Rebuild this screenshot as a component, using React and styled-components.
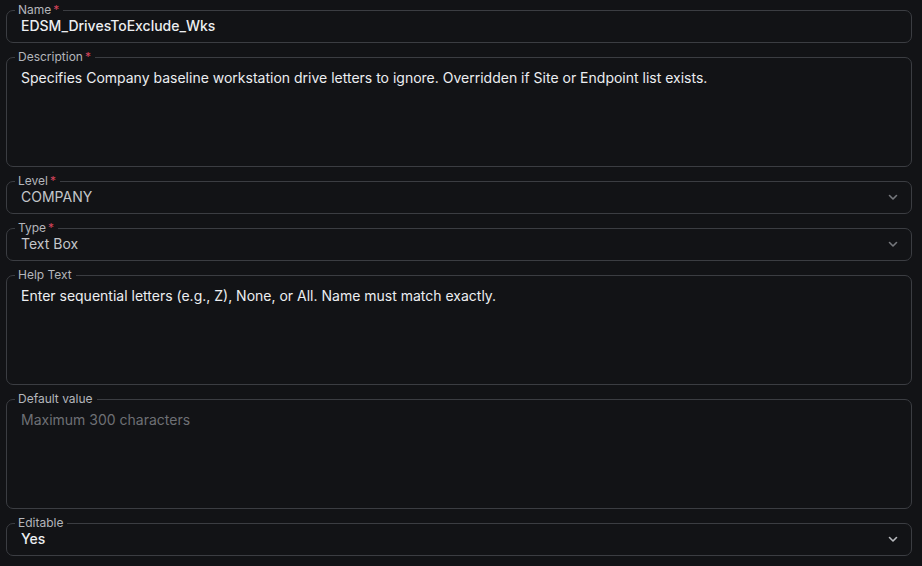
import React from 'react';
import styled, { createGlobalStyle } from 'styled-components';

const GlobalStyle = createGlobalStyle`
  html, body {
    margin: 0;
    background: #121316;
  }
  body {
    font-family: Inter, "Noto Sans", sans-serif;
  }
`;

const Form = styled.form`
  display: flex;
  flex-direction: column;
  gap: 7px;
  padding: 3px 10px 0 6px;
`;

const Field = styled.fieldset`
  margin: 0;
  padding: 0 14px;
  border: 1px solid #3b3d42;
  border-radius: 7px;
  min-width: 0;
`;

const Legend = styled.legend`
  margin-left: -6px;
  padding: 0 4px 0 3px;
  font-size: 12px;
  line-height: 14px;
  color: #b4b6bb;
`;

const Required = styled.span`
  color: #d2435a;
  margin-left: 2px;
`;

const Value = styled.div`
  display: flex;
  align-items: ${(p) => (p.$tall ? 'flex-start' : 'center')};
  justify-content: space-between;
  font-size: 14px;
  line-height: 20px;
  padding: ${(p) => (p.$tall ? '4px 0 0' : '0 0 6px')};
  margin-top: ${(p) => (p.$tall ? '0' : '-1px')};
  min-height: ${(p) => (p.$tall ? '98px' : '0')};
  color: ${(p) => (p.$muted ? '#c4c6ca' : p.$placeholder ? '#6e7075' : '#eceef1')};
  font-weight: ${(p) => (p.$strong ? 500 : 400)};
`;

const Chevron = styled.svg`
  flex: none;
  width: 12px;
  height: 12px;
  margin-right: -2px;
  color: ${(p) => (p.$light ? '#b8babe' : '#75777c')};
`;

const ChevronIcon = ({ light }) => (
  <Chevron $light={light} viewBox="0 0 12 12" fill="none">
    <path d="M2.5 4.5 6 8l3.5-3.5" stroke="currentColor" strokeWidth="1.6" strokeLinecap="round" strokeLinejoin="round" />
  </Chevron>
);

const fields = [
  { label: 'Name', required: true, value: 'EDSM_DrivesToExclude_Wks', strong: true },
  {
    label: 'Description',
    required: true,
    tall: true,
    value:
      'Specifies Company baseline workstation drive letters to ignore. Overridden if Site or Endpoint list exists.',
  },
  { label: 'Level', required: true, value: 'COMPANY', muted: true, select: true },
  { label: 'Type', required: true, value: 'Text Box', muted: true, select: true },
  {
    label: 'Help Text',
    tall: true,
    value: 'Enter sequential letters (e.g., Z), None, or All. Name must match exactly.',
  },
  { label: 'Default value', tall: true, value: 'Maximum 300 characters', placeholder: true },
  { label: 'Editable', value: 'Yes', strong: true, select: true, light: true },
];

export default function App() {
  return (
    <>
      <GlobalStyle />
      <Form>
        {fields.map((f) => (
          <Field key={f.label}>
            <Legend>
              {f.label}
              {f.required && <Required>*</Required>}
            </Legend>
            <Value
              $tall={f.tall}
              $muted={f.muted}
              $placeholder={f.placeholder}
              $strong={f.strong}
            >
              <span>{f.value}</span>
              {f.select && <ChevronIcon light={f.light} />}
            </Value>
          </Field>
        ))}
      </Form>
    </>
  );
}
